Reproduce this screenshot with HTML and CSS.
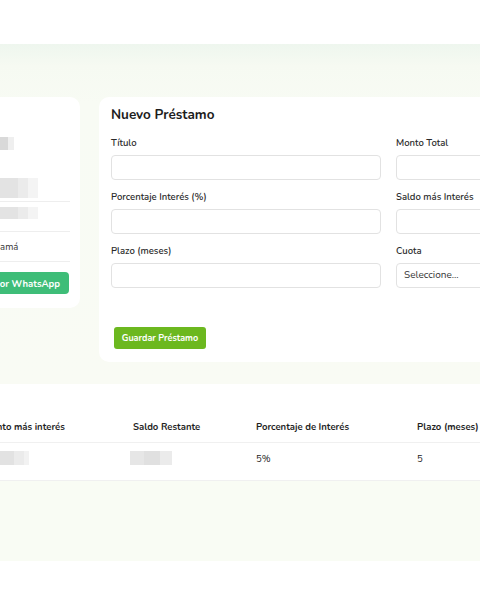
FILE: index.html
```html
<!DOCTYPE html>
<html lang="es">
<head>
<meta charset="utf-8">
<link rel="stylesheet" href="styles.css">
</head>
<body>
<div class="top"></div>
<section class="band">
  <div class="row">
    <aside class="card side">
      <div class="blur b-name"><span></span><span></span></div>
      <div class="item"><div class="blur b-l1"><span></span><span></span><span></span></div></div>
      <div class="item"><div class="blur b-l2"><span></span><span></span><span></span></div></div>
      <div class="item"><span class="txt">Mamá</span></div>
      <button class="wa">Contactar por WhatsApp</button>
    </aside>
    <main class="card form-card">
      <h2 class="title">Nuevo Préstamo</h2>
      <div class="grid">
        <div class="field"><label>Título</label><div class="input"></div></div>
        <div class="field"><label>Monto Total</label><div class="input"></div></div>
        <div class="field"><label>Porcentaje Interés (%)</label><div class="input"></div></div>
        <div class="field"><label>Saldo más Interés</label><div class="input"></div></div>
        <div class="field"><label>Plazo (meses)</label><div class="input"></div></div>
        <div class="field"><label>Cuota</label><div class="input select">Seleccione...</div></div>
      </div>
      <button class="save">Guardar Préstamo</button>
    </main>
  </div>
</section>
<section class="table">
  <div class="tr th">
    <div class="c1">Monto más interés</div>
    <div>Saldo Restante</div>
    <div>Porcentaje de Interés</div>
    <div>Plazo (meses)</div>
  </div>
  <div class="tr td">
    <div class="c1"><span class="blur b-t1"><span></span><span></span><span></span></span></div>
    <div><span class="blur b-t2"><span></span><span></span><span></span></span></div>
    <div>5%</div>
    <div>5</div>
  </div>
</section>
<section class="band2"></section>
</body>
</html>
```
FILE: styles.css
```css
html, body {
  margin: 0;
  padding: 0;
  overflow: hidden;
  background: #ffffff;
  font-family: "Nunito", "Lato", "Noto Sans", sans-serif;
  color: #222;
}
.top { height: 44px; }
.band {
  height: 340px;
  background: linear-gradient(#eef6ee 0, #f6faf2 22px, #f8fbf4 60px, #f9fbf4 100%);
  padding-top: 53px;
  box-sizing: border-box;
}
.row {
  display: flex;
  gap: 19px;
  margin-left: -90px;
  align-items: flex-start;
}
.card {
  background: #fff;
  border-radius: 10px;
}
.side {
  width: 170px;
  flex: none;
  box-sizing: border-box;
  height: 211px;
  padding: 40px 10px 0 20px;
}
.blur { display: flex; height: 13px; }
.blur span { display: block; height: 100%; }
.b-name { margin-left: 70px; height: 13px; }
.b-name span:nth-child(1) { width: 8px; background: #d9d9d9; }
.b-name span:nth-child(2) { width: 6px; background: #efefef; }
.item {
  border-bottom: 1px solid #eeeeee;
  height: 29px;
  display: flex;
  align-items: center;
  margin-left: 60px;
}
.item:nth-of-type(2) { margin-top: 17px; height: 34px; align-items: flex-end; }
.b-l1, .b-l2 { margin-left: 10px; height: 20px; margin-bottom: 3px; }
.b-l1 span:nth-child(1), .b-l2 span:nth-child(1) { width: 18px; background: #e3e3e3; }
.b-l1 span:nth-child(2), .b-l2 span:nth-child(2) { width: 10px; background: #ebebeb; }
.b-l1 span:nth-child(3), .b-l2 span:nth-child(3) { width: 10px; background: #f4f4f4; }
.b-l2 { height: 12px; margin-bottom: 8px; }
.txt { font-size: 9.5px; margin-left: 2px; color: #333; }
.wa {
  margin-top: 10px;
  background: #3ebd78;
  color: #fff;
  border: none;
  border-radius: 4px;
  font: 700 9.5px "Nunito", "Lato", "Noto Sans", sans-serif;
  height: 22px;
  width: 139px;
  text-align: right;
  padding: 0 9px 0 0;
}
.form-card {
  flex: none;
  width: 560px;
  height: 265px;
  box-sizing: border-box;
  padding: 10px 12px 0;
}
.title {
  margin: 0;
  font-size: 13.5px;
  line-height: 16px;
  font-weight: 700;
  color: #1c1c1c;
}
.grid {
  margin-top: 14px;
  display: grid;
  grid-template-columns: 270px 270px;
  column-gap: 15px;
  row-gap: 11px;
}
.field label {
  display: block;
  font-size: 9.5px;
  line-height: 12px;
  font-weight: 600;
  color: #2a2a2a;
  margin-bottom: 6px;
}
.input {
  height: 25px;
  box-sizing: border-box;
  border: 1px solid #e2e2e2;
  border-radius: 4px;
  background: #fff;
}
.select {
  font-size: 10px;
  line-height: 23px;
  padding-left: 7px;
  color: #333;
}
.save {
  margin-top: 39px;
  margin-left: 3px;
  background: #6cb81f;
  color: #fff;
  border: none;
  border-radius: 3px;
  height: 22px;
  width: 92px;
  padding: 0;
  font: 700 9px "Nunito", "Lato", "Noto Sans", sans-serif;
}
.table {
  height: 97px;
  background: #fff;
  box-sizing: border-box;
  padding-top: 34px;
  border-bottom: 1px solid #f0f0f0;
}
.tr {
  display: grid;
  grid-template-columns: 143px 123px 161px 120px;
  margin-left: -10px;
  font-size: 9.5px;
}
.th {
  font-weight: 700;
  height: 24px;
  line-height: 18px;
  border-bottom: 1px solid #f0f0f0;
  color: #1f1f1f;
}
.td {
  height: 30px;
  align-items: center;
  color: #222;
}
.th .c1 { text-indent: -7px; }
.b-t1 { height: 14px; display: inline-flex; vertical-align: middle; margin-left: 10px; }
.b-t1 span:nth-child(1) { width: 14px; background: #e2e2e2; }
.b-t1 span:nth-child(2) { width: 10px; background: #ebebeb; }
.b-t1 span:nth-child(3) { width: 5px; background: #f2f2f2; }
.b-t2 { height: 14px; display: inline-flex; vertical-align: middle; margin-left: -3px; }
.b-t2 span:nth-child(1) { width: 14px; background: #e6e6e6; }
.b-t2 span:nth-child(2) { width: 16px; background: #e0e0e0; }
.b-t2 span:nth-child(3) { width: 12px; background: #ebebeb; }
.band2 {
  height: 80px;
  background: #f9fcf4;
}
```
